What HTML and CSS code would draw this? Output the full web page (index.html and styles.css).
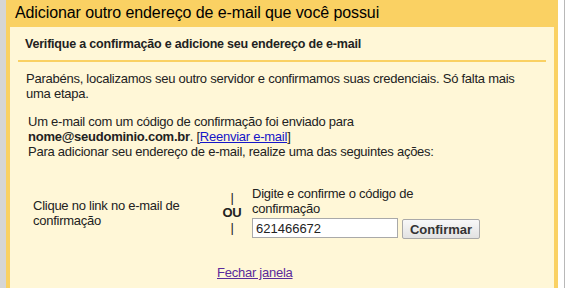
FILE: index.html
```html
<!DOCTYPE html>
<html lang="pt-BR">

<head>
    <meta charset="UTF-8">
    <meta name="viewport" content="width=device-width, initial-scale=1.0">
    <title>Adicionar outro endereço de e-mail</title>
    <link rel="stylesheet" href="styles.css">
</head>

<body>
    <div class="screen">
        <div class="dialog">
            <div class="dialog-title">Adicionar outro endereço de e-mail que você possui</div>
            <div class="dialog-body">
                <div class="step-title">Verifique a confirmação e adicione seu endereço de e-mail</div>
                <p class="intro">Parabéns, localizamos seu outro servidor e confirmamos suas credenciais. Só falta mais uma etapa.</p>
                <p class="info">
                    Um e-mail com um código de confirmação foi enviado para<br>
                    <b>nome@seudominio.com.br</b>. [<a href="#" class="resend">Reenviar e-mail</a>]<br>
                    Para adicionar seu endereço de e-mail, realize uma das seguintes ações:
                </p>
                <div class="options">
                    <div class="option-link">Clique no link no e-mail de confirmação</div>
                    <div class="option-or">
                        <span>|</span>
                        <b>OU</b>
                        <span>|</span>
                    </div>
                    <div class="option-code">
                        <label for="codigo">Digite e confirme o código de confirmação</label>
                        <div class="code-row">
                            <input type="text" id="codigo" name="codigo" value="621466672">
                            <button type="button">Confirmar</button>
                        </div>
                    </div>
                </div>
                <div class="close-row">
                    <a href="#" class="close-link">Fechar janela</a>
                </div>
            </div>
        </div>
    </div>
</body>

</html>
```

FILE: styles.css
```css
body {
    margin: 0;
    background-color: #fff;
    font-family: "Liberation Sans", Arial, sans-serif;
    font-size: 13px;
    letter-spacing: -0.25px;
    color: #222;
}

.screen {
    height: 288px;
    border-left: 6px solid #d6d6d6;
    border-right: 1px solid #b8b8b8;
    padding-right: 6px;
    box-sizing: border-box;
}

.dialog {
    height: 100%;
    background-color: #fad163;
    padding: 0 4px;
    display: flex;
    flex-direction: column;
}

.dialog-title {
    font-size: 16px;
    letter-spacing: -0.1px;
    color: #000;
    height: 27px;
    line-height: 26px;
    padding-left: 5px;
}

.dialog-body {
    flex: 1;
    background-color: #fff7d7;
    padding: 0 8px;
}

.step-title {
    font-weight: bold;
    font-size: 12.5px;
    letter-spacing: -0.2px;
    padding: 10px 0 8px 7px;
    border-bottom: 2px solid #fad163;
    line-height: 15px;
}

.intro {
    width: 498px;
    margin: 9px 0 0 8px;
    line-height: 15px;
}

.info {
    margin: 13px 0 0 10px;
    line-height: 15px;
}

.option-link,
.option-or,
.option-code {
    line-height: 15px;
}

.options {
    display: flex;
    align-items: center;
    margin: 27px 0 0 15px;
}

.option-link {
    width: 180px;
}

.option-or {
    display: flex;
    flex-direction: column;
    align-items: center;
    width: 28px;
    margin-left: 5px;
}

.option-code {
    width: 230px;
    margin-left: 6px;
}

.code-row {
    display: flex;
    gap: 4px;
    margin-top: 2px;
}

.code-row input {
    width: 146px;
    height: 20px;
    box-sizing: border-box;
    border: 1px solid #a9a9a9;
    padding: 0 3px;
    font-family: inherit;
    font-size: 13px;
    color: #222;
    background: #fff;
}

.code-row button {
    width: 78px;
    height: 20px;
    margin-top: 1px;
    font-family: inherit;
    font-size: 13px;
    font-weight: bold;
    color: #333;
    border: 1px solid #a9a9a9;
    border-radius: 2px;
    background: linear-gradient(#f8f8f8, #e2e2e2);
    padding: 0;
}

.close-row {
    margin: 26px 0 0 199px;
}

a.resend {
    color: #1515c8;
}

a.close-link {
    color: #5a2a9b;
}
```
